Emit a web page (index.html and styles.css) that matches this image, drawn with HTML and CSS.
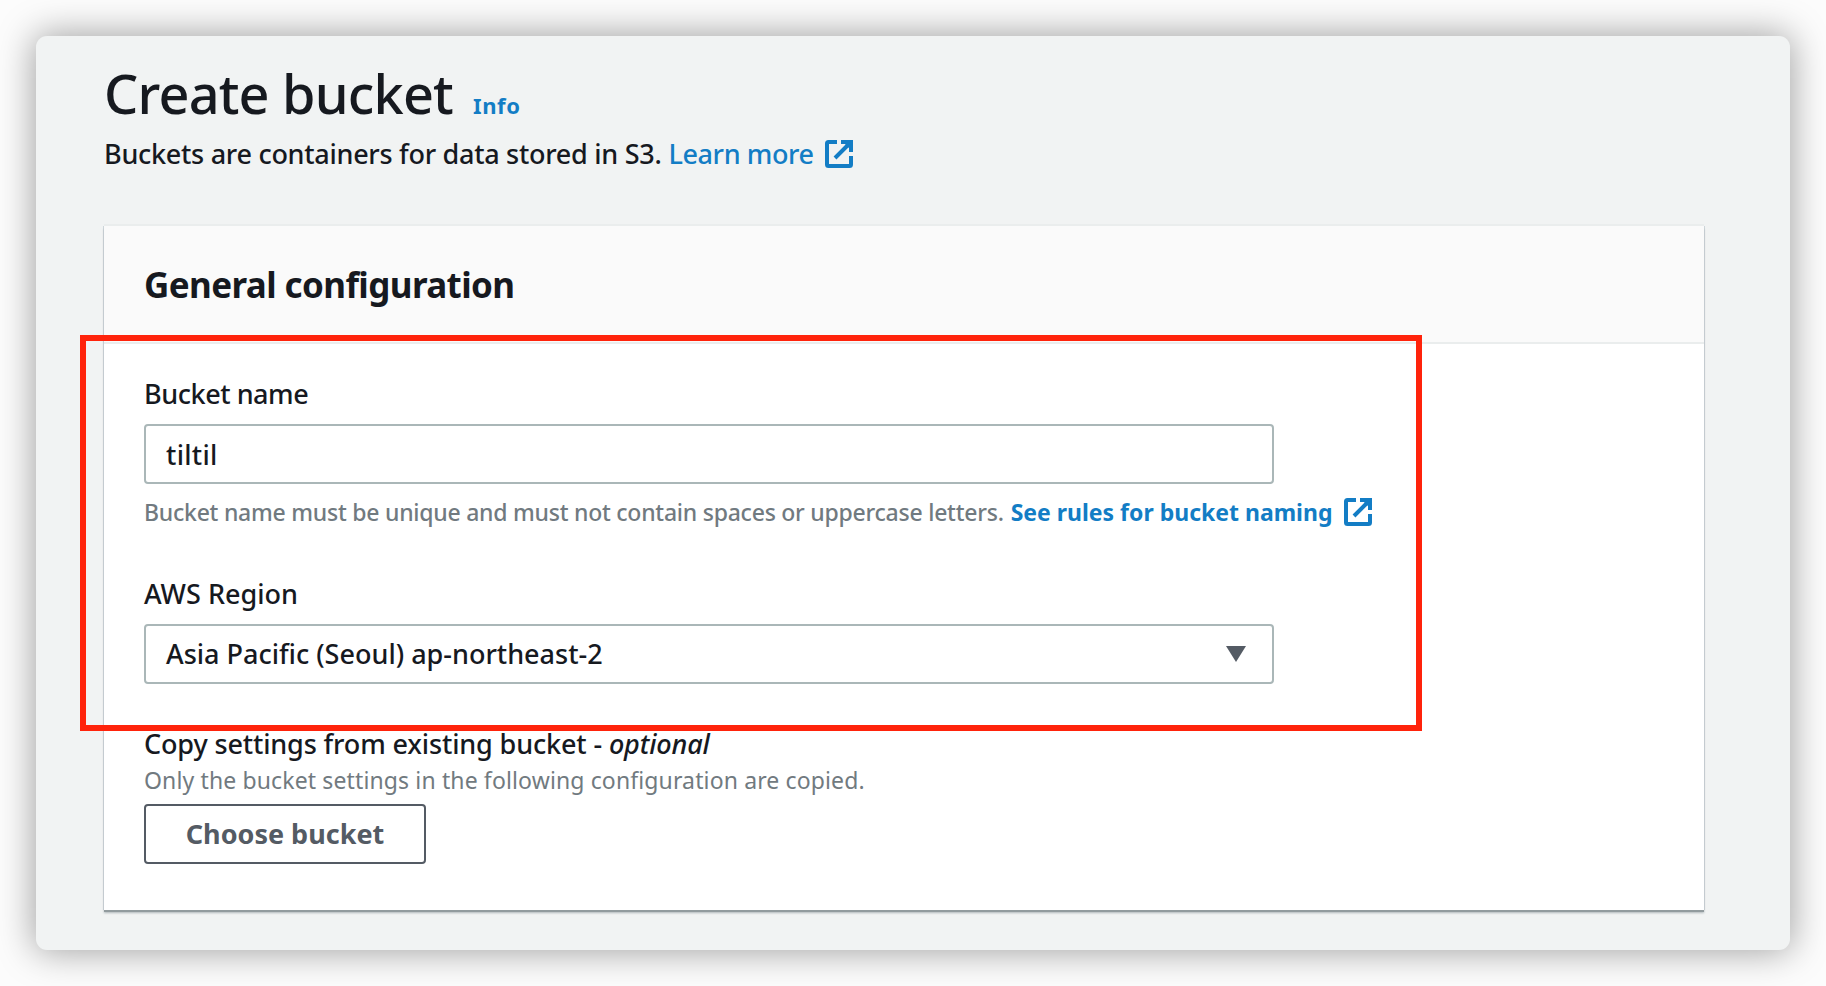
FILE: index.html
```
<!DOCTYPE html>
<html lang="en">
<head>
<meta charset="utf-8">
<title>Create bucket</title>
<link rel="stylesheet" href="styles.css">
</head>
<body>
<svg class="defs" width="0" height="0" aria-hidden="true">
  <symbol id="external" viewBox="0 0 28 28">
    <path d="M12 2H3.500Q2 2 2 3.500V24.500Q2 26 3.500 26H24.500Q26 26 26 24.500V16M16 2H26V12M24 4L10 18" fill="none" stroke="currentColor" stroke-width="4"/>
    <path d="M18 2H26V10Z" fill="currentColor"/>
  </symbol>
</svg>
<main class="window">
  <header class="page-header">
    <div class="title-row">
      <h1 class="title">Create bucket</h1>
      <a class="info">Info</a>
    </div>
    <p class="description"><span>Buckets are containers for data stored in S3.</span><a class="learn">Learn more</a><svg class="external"><use href="#external"/></svg></p>
  </header>
  <section class="card">
    <div class="card-header"><h2 class="card-title">General configuration</h2></div>
    <div class="card-body">
      <div class="highlight"></div>
      <label class="label">Bucket name</label>
      <div class="field field-name">tiltil</div>
      <p class="hint name-hint"><span>Bucket name must be unique and must not contain spaces or uppercase letters.</span><a class="rules">See rules for bucket naming</a><svg class="external"><use href="#external"/></svg></p>
      <label class="label label-region">AWS Region</label>
      <div class="field field-region"><span>Asia Pacific (Seoul) ap-northeast-2</span><svg class="caret" viewBox="0 0 20 16"><path d="M0 0H20L10 16Z"/></svg></div>
      <label class="label label-copy">Copy settings from existing bucket - <em>optional</em></label>
      <p class="hint copy-hint">Only the bucket settings in the following configuration are copied.</p>
      <button class="choose">Choose bucket</button>
    </div>
  </section>
</main>
</body>
</html>
```
FILE: styles.css
```
* { box-sizing: border-box; }
body {
  margin: 0;
  height: 986px;
  padding: 36px;
  overflow: hidden;
  background: #fcfcfc;
  color: #16191f;
  font: 500 27px/40px "Noto Sans", "Open Sans", sans-serif;
  white-space: nowrap;
}
h1, h2, p { margin: 0; }
a { color: #137dc5; }
.defs { position: absolute; }
.window {
  width: 1754px;
  height: 914px;
  padding: 21px 85px 0 68px;
  border-radius: 11px;
  background: #f1f3f3;
  box-shadow: 0 0 36px 2px rgba(0, 0, 0, .36);
}
.title-row { display: flex; align-items: baseline; gap: 20px; }
.title { font-size: 54px; line-height: 72px; font-weight: 500; letter-spacing: -.8px; }
.info { font-size: 22px; font-weight: 700; letter-spacing: .6px; }
.description {
  display: flex;
  align-items: center;
  height: 40px;
  margin: 5px 0 52px 0;
  letter-spacing: -.28px;
}
.learn { margin-left: 7px; letter-spacing: -.4px; }
.external { flex: none; width: 28px; height: 28px; margin-left: 11px; color: #137dc5; }
.card {
  width: 1600px;
  height: 684px;
  background: #fff;
  box-shadow: 0 2px 0 #929b9e, 0 3px 2px #b0b8bb, -1px 0 0 #cdd5da, 1px 0 0 #cdd5da, 0 -2px 0 #eaeded;
}
.card-header {
  height: 118px;
  padding-left: 40px;
  border-bottom: 2px solid #eaeded;
  background: #fafafa;
}
.card-title { font-size: 35px; line-height: 117px; font-weight: 700; letter-spacing: -.6px; }
.card-body { position: relative; padding: 30px 0 0 40px; }
.label { display: block; margin: 0 0 10px; letter-spacing: -.45px; }
.field {
  display: flex;
  align-items: center;
  justify-content: space-between;
  width: 1130px;
  height: 60px;
  padding: 0 26px 0 20px;
  border: 2px solid #aab7b8;
  border-radius: 4px;
  background: #fff;
}
.field-name { padding-top: 2px; letter-spacing: .3px; }
.field-region { letter-spacing: 0; }
.caret { width: 20px; height: 16px; fill: #545b64; }
.hint { font-size: 23px; color: #717a80; }
.name-hint {
  display: flex;
  align-items: center;
  height: 40px;
  margin-top: 8px;
  letter-spacing: -.24px;
}
.rules { margin-left: 7px; font-weight: 700; letter-spacing: 0; }
.name-hint .external { margin-left: 12px; }
.label-region { margin-top: 42px; letter-spacing: 0; }
.label-copy { margin: 40px 0 0; letter-spacing: -.14px; }
.copy-hint { line-height: 32px; font-weight: 400; letter-spacing: .13px; }
.choose {
  display: block;
  width: 282px;
  height: 60px;
  margin-top: 8px;
  padding: 0;
  border: 2px solid #545b64;
  border-radius: 4px;
  background: #fff;
  color: #545b64;
  font: 700 27px/38px "Noto Sans", "Open Sans", sans-serif;
  letter-spacing: 0;
}
.highlight {
  position: absolute;
  left: -24px;
  top: -9px;
  width: 1342px;
  height: 396px;
  border: 6px solid #ff230b;
  pointer-events: none;
}
```
